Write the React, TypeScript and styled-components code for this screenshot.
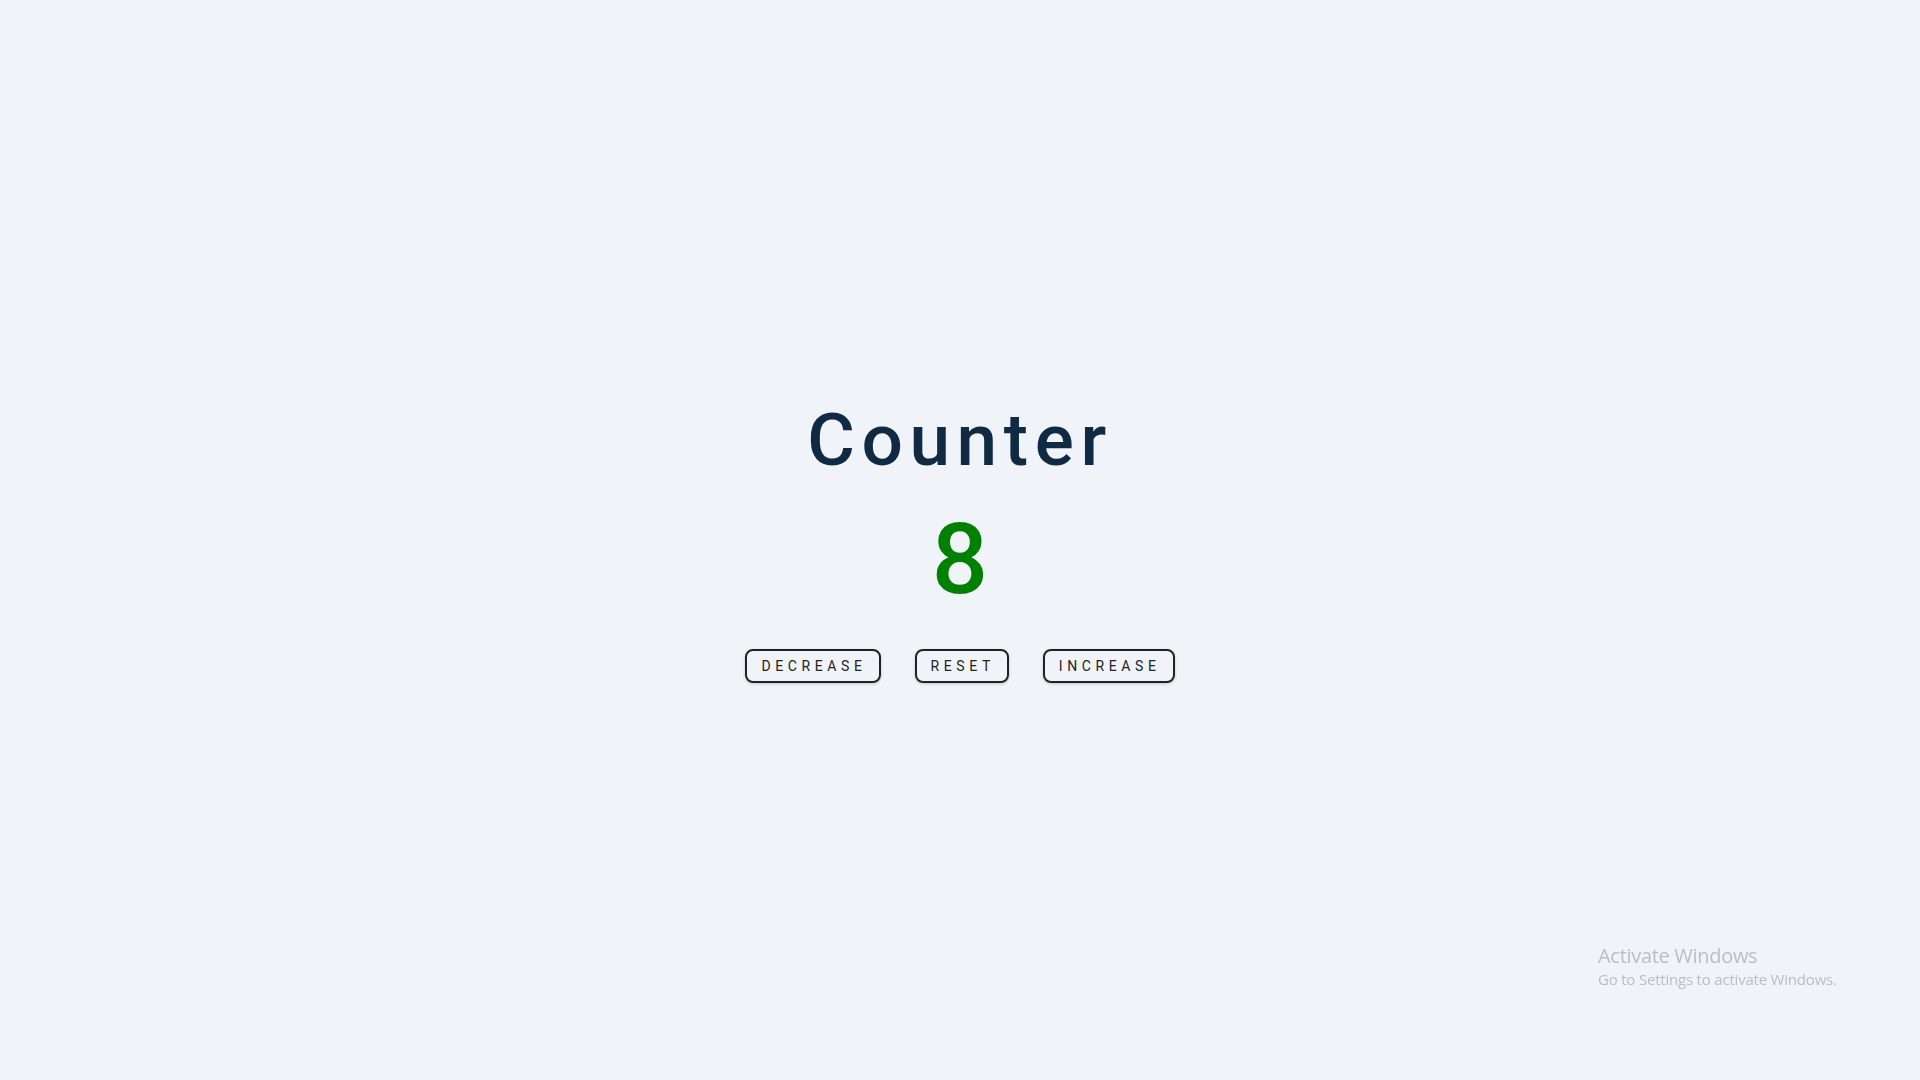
import styled, { createGlobalStyle } from 'styled-components'
import { useState } from 'react'

const GlobalStyle = createGlobalStyle`
  * {
    box-sizing: border-box;
    margin: 0;
    padding: 0;
  }

  body {
    background: #f0f4f8;
    font-family: 'Open Sans', 'Liberation Sans', sans-serif;
    color: #102a43;
    overflow: hidden;
  }
`

const Main = styled.main`
  min-height: 100vh;
  padding-bottom: 3px;
  display: flex;
  flex-direction: column;
  align-items: center;
  justify-content: center;
`

const Title = styled.h1`
  font-family: Roboto, 'Liberation Sans', sans-serif;
  font-size: 73px;
  font-weight: 500;
  line-height: 91px;
  letter-spacing: 6.6px;
  color: #102a43;
  margin-bottom: 23px;
`

const Value = styled.span<{ $count: number }>`
  font-family: Roboto, 'Liberation Sans', sans-serif;
  font-size: 99px;
  font-weight: 500;
  line-height: 100px;
  color: ${({ $count }) => ($count > 0 ? '#008000' : $count < 0 ? '#e63946' : '#222')};
  margin-bottom: 40px;
`

const ButtonRow = styled.div`
  display: flex;
  gap: 34px;
`

const Button = styled.button`
  font-family: Roboto, 'Liberation Sans', sans-serif;
  font-size: 14px;
  font-weight: 400;
  line-height: 18px;
  text-transform: uppercase;
  letter-spacing: 4.6px;
  color: #222;
  background: transparent;
  padding: 6px 12px 6px 14px;
  border: 2px solid #222;
  border-radius: 8px;
  box-shadow: 0 1px 3px rgba(0, 0, 0, 0.2);
  cursor: pointer;
`

const Watermark = styled.div`
  position: fixed;
  left: 1598px;
  top: 942px;
  font-family: 'Open Sans', 'Liberation Sans', sans-serif;
  color: #b9bec4;
  pointer-events: none;
`

const WatermarkTitle = styled.div`
  font-size: 20px;
  line-height: 27px;
  letter-spacing: -0.3px;
`

const WatermarkText = styled.div`
  font-size: 15px;
  line-height: 20px;
  letter-spacing: -0.2px;
`

export default function App() {
  const [count, setCount] = useState(8)

  return (
    <>
      <GlobalStyle />
      <Main>
        <Title>Counter</Title>
        <Value $count={count}>{count}</Value>
        <ButtonRow>
          <Button onClick={() => setCount(count - 1)}>decrease</Button>
          <Button onClick={() => setCount(0)}>reset</Button>
          <Button onClick={() => setCount(count + 1)}>increase</Button>
        </ButtonRow>
      </Main>
      <Watermark>
        <WatermarkTitle>Activate Windows</WatermarkTitle>
        <WatermarkText>Go to Settings to activate Windows.</WatermarkText>
      </Watermark>
    </>
  )
}
